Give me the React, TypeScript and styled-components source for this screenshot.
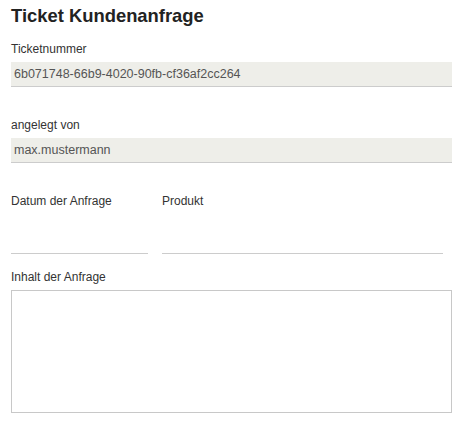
import React from "react";
import styled, { createGlobalStyle } from "styled-components";

const GlobalStyle = createGlobalStyle`
  html, body {
    margin: 0;
    padding: 0;
    background: #ffffff;
  }
  body {
    font-family: "Liberation Sans", Arial, sans-serif;
    color: #333333;
  }
`;

const Page = styled.div`
  display: flex;
  flex-direction: column;
  width: 441px;
  padding: 5px 10px 0 11px;
`;

const Title = styled.h2`
  margin: 0 0 15px 0;
  font-size: 18.4px;
  line-height: 22px;
  font-weight: bold;
  color: #222222;
`;

const Field = styled.div<{ $gap?: number }>`
  display: flex;
  flex-direction: column;
  margin-bottom: ${(p) => p.$gap ?? 0}px;
`;

const Label = styled.label`
  display: block;
  font-size: 12px;
  line-height: 14px;
  color: #333333;
  margin-bottom: 6px;
`;

const ReadOnlyInput = styled.div`
  height: 24px;
  line-height: 24px;
  padding-left: 3px;
  background: #eeeee9;
  border-bottom: 1px solid #cccccc;
  font-size: 12.5px;
  color: #555555;
`;

const LineInput = styled.div`
  height: 39px;
  border-bottom: 1px solid #cccccc;
`;

const Row = styled.div`
  display: grid;
  grid-template-columns: 137px 281px;
  column-gap: 14px;
  margin-bottom: 16px;
`;

const TextArea = styled.div`
  height: 121px;
  border: 1px solid #c8c8c8;
`;

const App = () => {
  return (
    <>
      <GlobalStyle />
      <Page>
        <Title>Ticket Kundenanfrage</Title>
        <Field $gap={31}>
          <Label>Ticketnummer</Label>
          <ReadOnlyInput>6b071748-66b9-4020-90fb-cf36af2cc264</ReadOnlyInput>
        </Field>
        <Field $gap={31}>
          <Label>angelegt von</Label>
          <ReadOnlyInput>max.mustermann</ReadOnlyInput>
        </Field>
        <Row>
          <Field>
            <Label>Datum der Anfrage</Label>
            <LineInput />
          </Field>
          <Field>
            <Label>Produkt</Label>
            <LineInput />
          </Field>
        </Row>
        <Field>
          <Label>Inhalt der Anfrage</Label>
          <TextArea />
        </Field>
      </Page>
    </>
  );
};

export default App;
